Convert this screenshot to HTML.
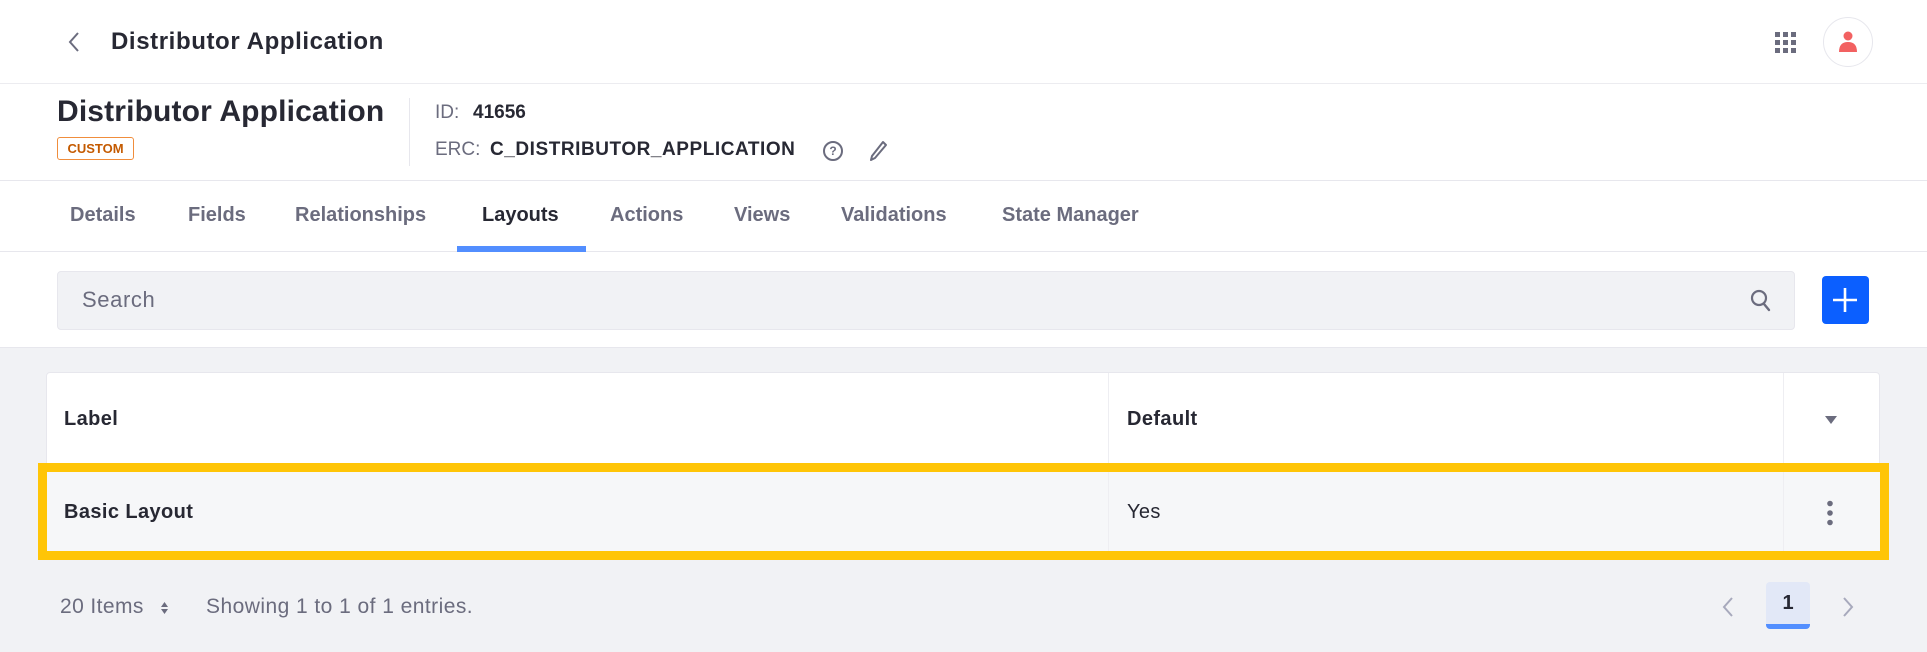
<!DOCTYPE html>
<html><head><meta charset="utf-8"><style>
*{box-sizing:border-box;margin:0;padding:0}
body{width:1927px;height:652px;overflow:hidden;background:#f1f2f5;font-family:"Liberation Sans",sans-serif;color:#272833;position:relative}
.abs{position:absolute}
.top{left:0;top:0;width:1927px;height:84px;background:#fff;border-bottom:1px solid #ececf0}
.hdr{left:0;top:84px;width:1927px;height:97px;background:#fff;border-bottom:1px solid #e7e7ed}
.tabs{left:0;top:181px;width:1927px;height:71px;background:#fff;border-bottom:1px solid #e7e7ed}
.mgmt{left:0;top:252px;width:1927px;height:96px;background:#fff;border-bottom:1px solid #e7e7ed}
.tab{position:absolute;top:23px;font-size:20px;color:#6b6c7e;font-weight:600}
.t{font-size:20px;letter-spacing:0.4px}
</style></head><body>
<div class="abs top">
 <svg class="abs" style="left:66px;top:31px" width="16" height="22" viewBox="0 0 16 22"><path d="M12 2 L4 11 L12 20" fill="none" stroke="#6b6c7e" stroke-width="2"/></svg>
 <div class="abs" style="left:111px;top:28px;font-size:24px;font-weight:700;letter-spacing:0.6px">Distributor Application</div>
 <svg class="abs" style="left:1775px;top:32px" width="21" height="21" viewBox="0 0 21 21" fill="#6b6c7e"><rect x="0" y="0" width="5" height="5"/><rect x="8" y="0" width="5" height="5"/><rect x="16" y="0" width="5" height="5"/><rect x="0" y="8" width="5" height="5"/><rect x="8" y="8" width="5" height="5"/><rect x="16" y="8" width="5" height="5"/><rect x="0" y="16" width="5" height="5"/><rect x="8" y="16" width="5" height="5"/><rect x="16" y="16" width="5" height="5"/></svg>
 <div class="abs" style="left:1823px;top:17px;width:50px;height:50px;border-radius:50%;border:1px solid #e7e7ed;background:#fff"></div>
 <svg class="abs" style="left:1838px;top:31px" width="20" height="22" viewBox="0 0 20 22" fill="#f26161"><circle cx="10" cy="5" r="4.5"/><path d="M1 21 Q1 11 10 11 Q19 11 19 21 Z"/></svg>
</div>
<div class="abs hdr">
 <div class="abs" style="left:57px;top:11px;font-size:30px;font-weight:700;letter-spacing:0.15px">Distributor Application</div>
 <div class="abs" style="left:57px;top:53px;width:77px;height:23px;border:1px solid #f08d3c;border-radius:3px;color:#c45a00;font-size:13px;font-weight:700;text-align:center;line-height:21px">CUSTOM</div>
 <div class="abs" style="left:409px;top:14px;width:1px;height:68px;background:#e7e7ed"></div>
 <div class="abs" style="left:435px;top:18px;font-size:19px;color:#6b6c7e">ID:</div>
 <div class="abs" style="left:473px;top:18px;font-size:19px;font-weight:700">41656</div>
 <div class="abs" style="left:435px;top:55px;font-size:19px;color:#6b6c7e">ERC:</div>
 <div class="abs" style="left:490px;top:55px;font-size:19px;font-weight:700;letter-spacing:0.55px">C_DISTRIBUTOR_APPLICATION</div>
 <div class="abs" style="left:823px;top:57px;width:20px;height:20px;border:2px solid #6b6c7e;border-radius:50%;font-size:12px;font-weight:700;color:#6b6c7e;text-align:center;line-height:16px">?</div>
 <svg class="abs" style="left:868px;top:56px" width="20" height="22" viewBox="0 0 20 22"><path d="M15 2 L18 5 L7 18 L3 20 L4 16 Z" fill="none" stroke="#6b6c7e" stroke-width="2" stroke-linejoin="round"/></svg>
</div>
<div class="abs tabs">
 <div class="tab" style="left:70px">Details</div>
 <div class="tab" style="left:188px">Fields</div>
 <div class="tab" style="left:295px">Relationships</div>
 <div class="tab" style="left:482px;color:#272833">Layouts</div>
 <div class="tab" style="left:610px">Actions</div>
 <div class="tab" style="left:734px">Views</div>
 <div class="tab" style="left:841px">Validations</div>
 <div class="tab" style="left:1002px">State Manager</div>
 <div class="abs" style="left:457px;top:65px;width:129px;height:6px;background:#528eff"></div>
</div>
<div class="abs mgmt">
 <div class="abs" style="left:57px;top:19px;width:1738px;height:59px;background:#f1f2f5;border:1px solid #e7e7ed;border-radius:4px"></div>
 <div class="abs" style="left:82px;top:35px;font-size:22px;letter-spacing:0.6px;color:#6b6c7e">Search</div>
 <svg class="abs" style="left:1750px;top:37px" width="22" height="24" viewBox="0 0 22 24"><circle cx="9" cy="9" r="7" fill="none" stroke="#6b6c7e" stroke-width="2.2"/><path d="M14 15 L19 21" stroke="#6b6c7e" stroke-width="2.4" stroke-linecap="round"/></svg>
 <div class="abs" style="left:1822px;top:24px;width:47px;height:48px;background:#0b5fff;border-radius:4px"></div>
 <svg class="abs" style="left:1831px;top:34px" width="28" height="28" viewBox="0 0 28 28"><path d="M14 2 V26 M2 14 H26" stroke="#fff" stroke-width="2.6"/></svg>
</div>
<div class="abs" style="left:46px;top:372px;width:1834px;height:188px;background:#fff;border:1px solid #e7e7ed;border-radius:4px"></div>
<div class="abs" style="left:46px;top:470px;width:1834px;height:82px;background:#f6f7f9"></div>
<div class="abs" style="left:1108px;top:373px;width:1px;height:180px;background:#eeeef2"></div>
<div class="abs" style="left:1783px;top:373px;width:1px;height:180px;background:#eeeef2"></div>
<div class="abs t" style="left:64px;top:408px;font-weight:700">Label</div>
<div class="abs t" style="left:1127px;top:408px;font-weight:700">Default</div>
<svg class="abs" style="left:1824px;top:415px" width="14" height="10" viewBox="0 0 14 10"><path d="M1 1 H13 L7 9 Z" fill="#6b6c7e"/></svg>
<div class="abs" style="left:38px;top:463px;width:1851px;height:97px;border:9px solid #ffc507"></div>
<div class="abs t" style="left:64px;top:501px;font-weight:700">Basic Layout</div>
<div class="abs t" style="left:1127px;top:501px">Yes</div>
<svg class="abs" style="left:1826px;top:500px" width="8" height="26" viewBox="0 0 8 26" fill="#6b6c7e"><circle cx="4" cy="3.5" r="2.8"/><circle cx="4" cy="13" r="2.8"/><circle cx="4" cy="22.5" r="2.8"/></svg>
<div class="abs" style="left:60px;top:595px;font-size:21px;letter-spacing:0.4px;color:#6b6c7e">20 Items</div>
<svg class="abs" style="left:160px;top:601px" width="9" height="14" viewBox="0 0 9 14" fill="#6b6c7e"><path d="M1 6 L4.5 1 L8 6 Z M1 8 L4.5 13 L8 8 Z"/></svg>
<div class="abs" style="left:206px;top:595px;font-size:21px;letter-spacing:0.45px;color:#6b6c7e">Showing 1 to 1 of 1 entries.</div>
<svg class="abs" style="left:1721px;top:596px" width="14" height="22" viewBox="0 0 14 22"><path d="M11 2 L3 11 L11 20" fill="none" stroke="#a7a9bc" stroke-width="2"/></svg>
<div class="abs" style="left:1766px;top:582px;width:44px;height:47px;background:#e2e8f7;border-radius:4px;border-bottom:5px solid #528eff;text-align:center;font-size:20px;font-weight:700;line-height:42px">1</div>
<svg class="abs" style="left:1841px;top:596px" width="14" height="22" viewBox="0 0 14 22"><path d="M3 2 L11 11 L3 20" fill="none" stroke="#a7a9bc" stroke-width="2"/></svg>
</body></html>
